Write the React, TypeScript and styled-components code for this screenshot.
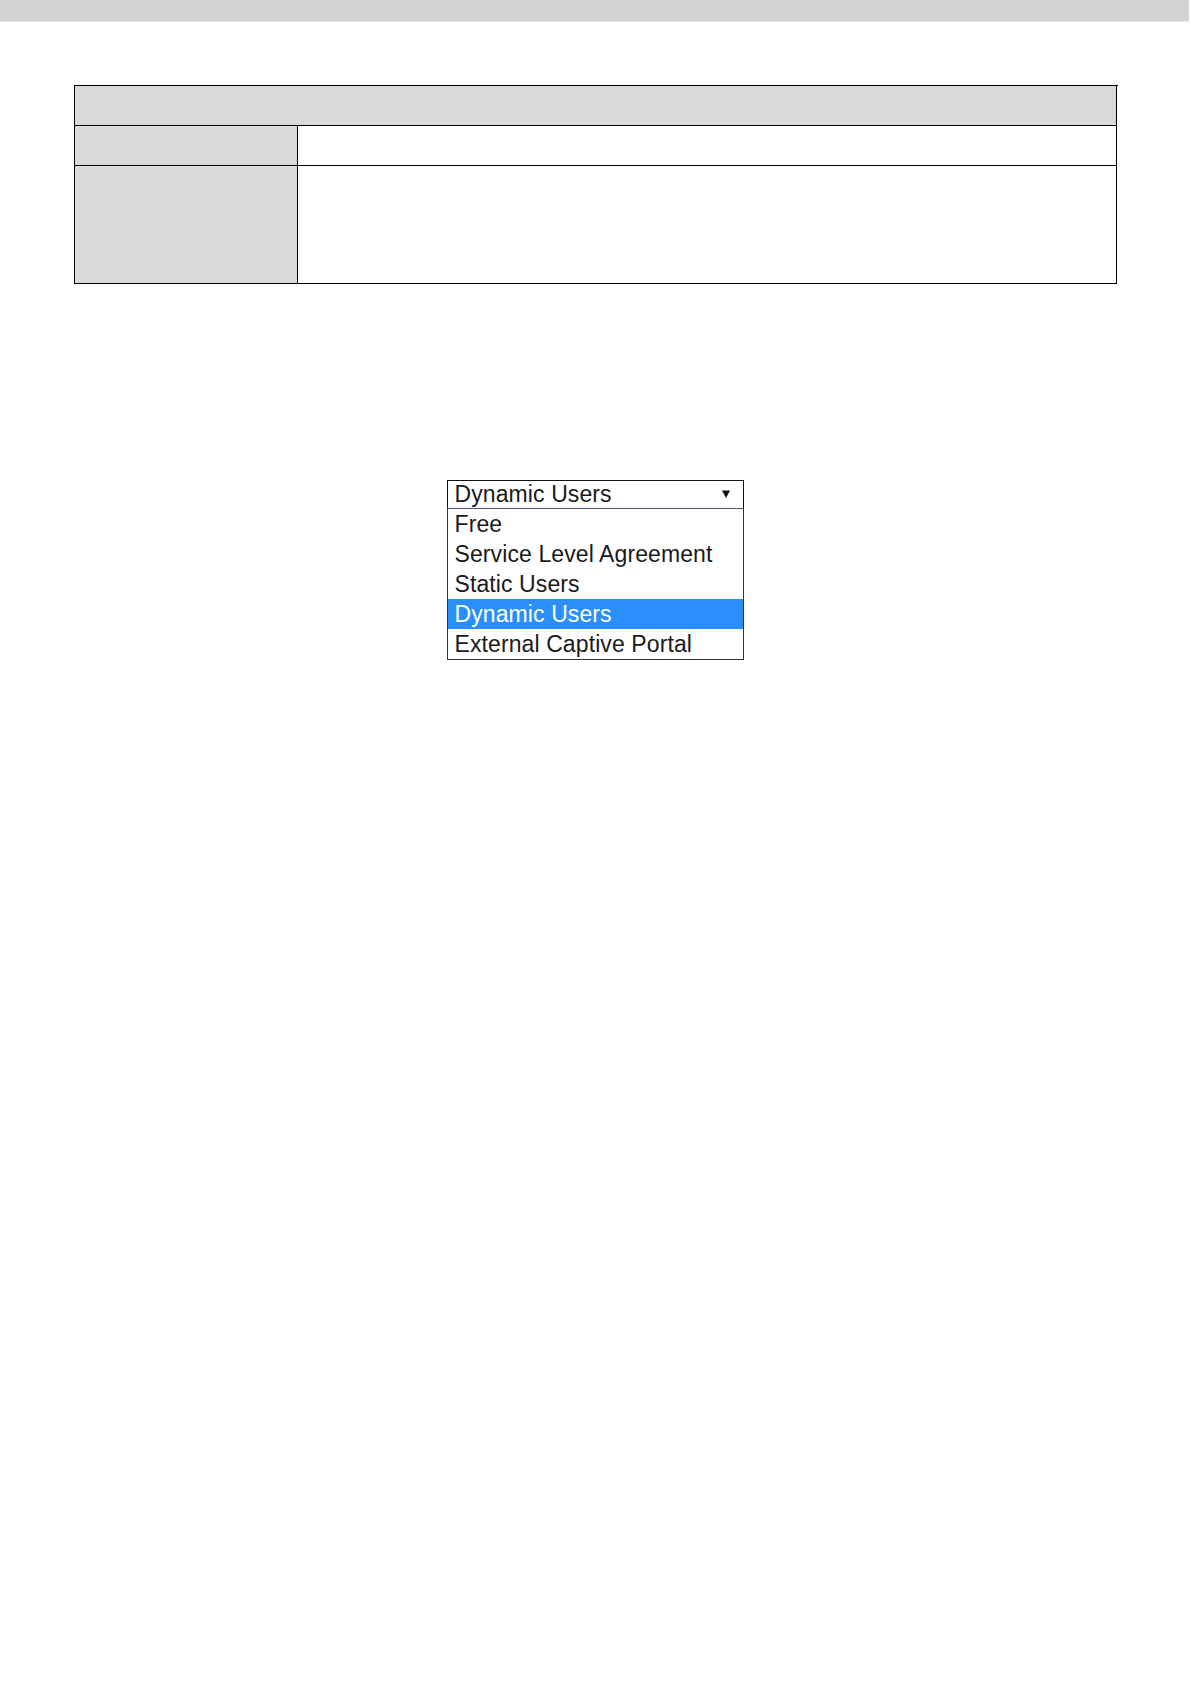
import styled, { createGlobalStyle } from 'styled-components';

const GlobalStyle = createGlobalStyle`
  html, body {
    margin: 0;
    padding: 0;
    background: #ffffff;
  }
  body {
    font-family: 'Liberation Sans', Arial, sans-serif;
    color: #1a1a1a;
  }
`;

const TopBar = styled.div`
  height: 21px;
  width: 1189px;
  background: #d3d3d3;
  border-bottom: 1px solid #e9e9e9;
`;

const Page = styled.main`
  padding: 63px 0 0 74px;
`;

const InfoTable = styled.div`
  display: grid;
  grid-template-columns: 223px 819px;
  grid-template-rows: 40px 40px 118px;
  width: 1043px;
  border-left: 1px solid #000;
  border-top: 1px solid #000;
`;

const Cell = styled.div<{ $shaded?: boolean; $span?: number }>`
  box-sizing: border-box;
  background: ${(p) => (p.$shaded ? '#d9d9d9' : '#ffffff')};
  border-right: 1px solid #000;
  border-bottom: 1px solid #000;
  grid-column: ${(p) => (p.$span ? `span ${p.$span}` : 'auto')};
`;

const DropdownArea = styled.section`
  display: flex;
  justify-content: center;
  padding-top: 196px;
`;

const Dropdown = styled.div`
  width: 297px;
  box-sizing: border-box;
  margin-left: -1px;
  font-size: 23px;
  letter-spacing: 0.1px;
`;

const SelectBox = styled.div`
  display: flex;
  align-items: center;
  justify-content: space-between;
  height: 29px;
  box-sizing: border-box;
  padding: 0 13px 0 7px;
  border: 1px solid #111;
  border-bottom: 1px solid #4a5870;
  line-height: 27px;
  color: #1a1a1a;
`;

const Arrow = styled.svg`
  width: 8px;
  height: 8px;
  margin-top: -1px;
`;

const OptionList = styled.ul`
  list-style: none;
  margin: 0;
  padding: 0;
  border: 1px solid #2c3647;
  border-top: none;
`;

const Option = styled.li<{ $selected?: boolean }>`
  height: 30px;
  line-height: 30px;
  padding-left: 7px;
  background: ${(p) => (p.$selected ? '#2b8ffa' : 'transparent')};
  color: ${(p) => (p.$selected ? '#ffffff' : '#1a1a1a')};
  white-space: nowrap;
`;

const options = [
  'Free',
  'Service Level Agreement',
  'Static Users',
  'Dynamic Users',
  'External Captive Portal',
];

export default function App(): React.ReactElement {
  const selected = 'Dynamic Users';
  return (
    <>
      <GlobalStyle />
      <TopBar />
      <Page>
        <InfoTable>
          <Cell $shaded $span={2} />
          <Cell $shaded />
          <Cell />
          <Cell $shaded />
          <Cell />
        </InfoTable>
      </Page>
      <DropdownArea>
        <Dropdown>
          <SelectBox>
            <span>{selected}</span>
            <Arrow viewBox="0 0 8 8">
              <polygon points="0,0.5 8,0.5 4,8" fill="#111" />
            </Arrow>
          </SelectBox>
          <OptionList>
            {options.map((o) => (
              <Option key={o} $selected={o === selected}>
                {o}
              </Option>
            ))}
          </OptionList>
        </Dropdown>
      </DropdownArea>
    </>
  );
}
